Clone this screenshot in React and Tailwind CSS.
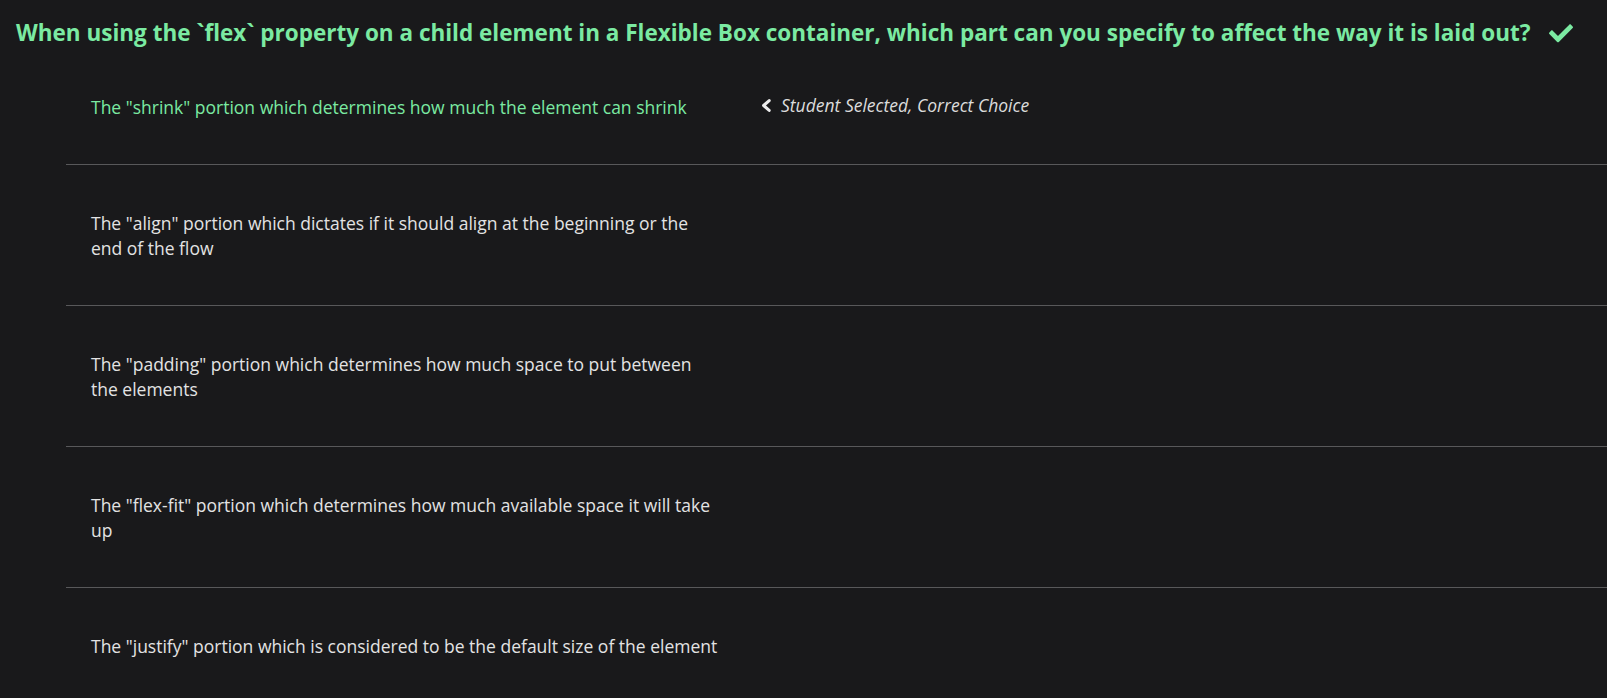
import React from "react";

const options = [
  { text: 'The "shrink" portion which determines how much the element can shrink', selected: true },
  { text: 'The "align" portion which dictates if it should align at the beginning or the end of the flow' },
  { text: 'The "padding" portion which determines how much space to put between the elements' },
  { text: 'The "flex-fit" portion which determines how much available space it will take up' },
  { text: 'The "justify" portion which is considered to be the default size of the element' },
];

export default function App() {
  return (
    <div
      className="min-h-[698px] bg-[#19191b] text-[#e3e3e3]"
      style={{ fontFamily: '"Open Sans", "Noto Sans", sans-serif' }}
    >
      <div className="flex items-center pl-4 pt-[16px]">
        <h1 className="text-[22.5px] leading-[33px] font-bold text-[#7beaa2]">
          When using the `flex` property on a child element in a Flexible Box container, which part can you specify to affect the way it is laid out?
        </h1>
        <svg className="ml-[19px] w-[24px] h-[20px]" viewBox="0 0 512 400" fill="#7beaa2">
          <path d="M173.9 389.8L7.5 223.4c-10-10-10-26.2 0-36.2l36.2-36.2c10-10 26.2-10 36.2 0L192 263.1 432.1 23c10-10 26.2-10 36.2 0l36.2 36.2c10 10 10 26.2 0 36.2L210.1 389.8c-10 10-26.2 10-36.2 0z" />
        </svg>
      </div>
      <div className="ml-[66px]">
        {options.map((o, i) => (
          <div
            key={i}
            className={`flex items-center pl-[25px] pt-[46px] pb-[44px] ${i < options.length - 1 ? "border-b border-[#58585a]" : ""}`}
          >
            <div className={`w-[628px] text-[17.5px] leading-[25px] ${o.selected ? "text-[#7beaa2]" : ""}`}>
              {o.text}
            </div>
            {o.selected && (
              <div className="ml-[42px] flex items-center gap-[9px] text-[17.5px] italic text-[#dcdcdc] -mt-[5px]">
                <svg className="w-[11px] h-[13px]" viewBox="0 0 11 13" fill="none" stroke="#ececec" strokeWidth="3" strokeLinecap="round" strokeLinejoin="round">
                  <path d="M8.2 1.6 L2.6 6.5 L8.2 11.4" />
                </svg>
                <span>Student Selected, Correct Choice</span>
              </div>
            )}
          </div>
        ))}
      </div>
    </div>
  );
}
